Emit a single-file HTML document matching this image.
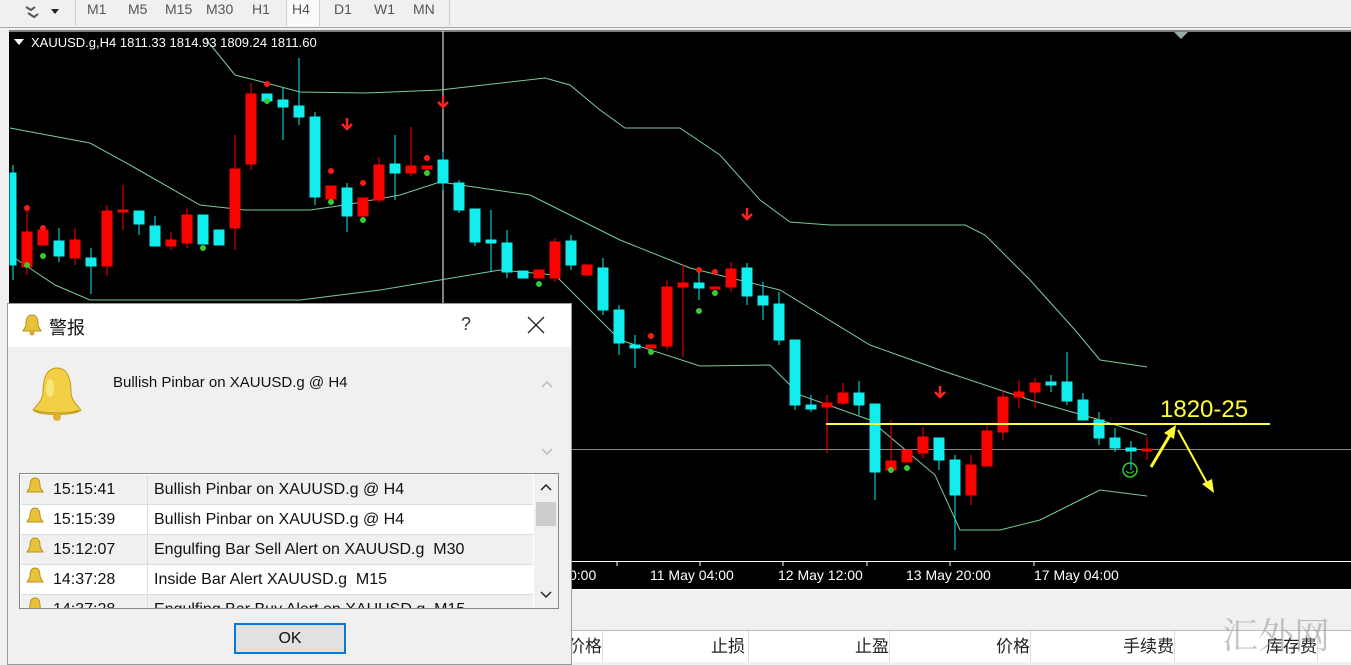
<!DOCTYPE html>
<html><head><meta charset="utf-8"><style>
body{margin:0;width:1351px;height:661px;overflow:hidden;background:#f0f0f0;font-family:"Liberation Sans","Noto Sans CJK SC",sans-serif;position:relative}
.tb{position:absolute;left:0;top:0;width:1351px;height:27px;background:#f0f0f0;border-bottom:1px solid #aaa}
.tb span{position:absolute;top:0;font-size:14px;color:#555;line-height:18px}
.hdr{position:absolute;top:630px;height:31px;left:560px;right:0;background:#fff;border-top:1px solid #bbb}
.hdr div{position:absolute;top:0;height:31px;border-right:1px solid #ddd;font-size:17px;text-align:right;line-height:31px;color:#222}
.dlg{position:absolute;left:7px;top:303px;width:563px;height:360px;background:#f0f0f0;border:1px solid #999}
.title{height:43px;background:#fff;position:relative}
.row{position:absolute;left:1px;width:512px;height:29px;border-bottom:1px solid #ddd;font-size:16px;line-height:29px;color:#111}
.row .t{position:absolute;left:32px}.row .m{position:absolute;left:133px}
.row .sep{position:absolute;left:126px;top:0;height:29px;border-left:1px solid #ddd}
</style></head><body>
<div class="tb">
<svg style="position:absolute;left:22px;top:2px" width="45" height="20"><path d="M4 5l5 3 4-3M6 11l6 4 4-3" stroke="#555" stroke-width="2" fill="none"/><path d="M29 7h8l-4 5z" fill="#222"/></svg>
<div style="position:absolute;left:75px;top:0;width:1px;height:26px;background:#ccc"></div>
<span style="left:87px">M1</span><span style="left:128px">M5</span><span style="left:165px">M15</span><span style="left:206px">M30</span><span style="left:252px">H1</span>
<div style="position:absolute;left:286px;top:0;width:32px;height:26px;background:#fafafa;border-left:1px solid #ccc;border-right:1px solid #ccc"></div>
<span style="left:292px">H4</span><span style="left:334px">D1</span><span style="left:374px">W1</span><span style="left:413px">MN</span>
<div style="position:absolute;left:449px;top:0;width:1px;height:26px;background:#ccc"></div>
</div>
<svg style="position:absolute;left:0;top:28px" width="1351" height="563" viewBox="0 28 1351 563">
<rect x="0" y="28" width="1351" height="563" fill="#f0f0f0"/>
<rect x="9" y="30" width="1342" height="559" fill="#000"/>
<line x1="9" y1="31" x2="1351" y2="31" stroke="#fff"/>
<line x1="9" y1="589.5" x2="1351" y2="589.5" stroke="#fff"/>
<line x1="9" y1="561.5" x2="1351" y2="561.5" stroke="#fff"/>
<path d="M1174 32h14l-7 7z" fill="#9aa"/>
<line x1="443" y1="31" x2="443" y2="560" stroke="#fff"/>
<line x1="9" y1="449.5" x2="1351" y2="449.5" stroke="#888"/>
<g fill="none" stroke="#7fc99a" stroke-width="1">
<path d="M205 38 L235 75 L255 80 L300 92 L365 93 L440 90 L545 78 L570 85 L600 110 L625 128 L680 128 L720 155 L760 200 L790 222 L830 225 L920 225 L965 225 L985 235 L1030 280 L1075 330 L1100 360 L1147 367"/>
<path d="M10 128 L90 143 L130 165 L200 205 L245 210 L310 210 L345 205 L400 195 L440 182 L495 190 L530 195 L560 210 L620 240 L690 268 L780 290 L870 345 L940 370 L1030 400 L1100 420 L1147 435"/>
<path d="M10 255 L55 285 L90 300 L300 300 L380 290 L440 280 L500 270 L555 275 L620 340 L700 366 L770 365 L800 395 L870 420 L935 475 L960 530 L1000 530 L1040 520 L1080 500 L1100 490 L1147 496"/>
</g>
<g stroke-width="1">
<!-- candles: cx, top, bottom -->
<g fill="#11eeee" stroke="#11eeee">
<rect x="10" y="173" width="6" height="92"/><line x1="13" y1="165" x2="13" y2="280"/>
<rect x="54" y="241" width="10" height="15"/><line x1="59" y1="228" x2="59" y2="262"/>
<rect x="86" y="258" width="10" height="8"/><line x1="91" y1="248" x2="91" y2="294"/>
<rect x="134" y="211" width="10" height="13"/><line x1="139" y1="211" x2="139" y2="235"/>
<rect x="150" y="226" width="10" height="20"/><line x1="155" y1="216" x2="155" y2="246"/>
<rect x="198" y="215" width="10" height="29"/>
<rect x="214" y="230" width="10" height="15"/>
<rect x="262" y="94" width="10" height="7"/>
<rect x="278" y="100" width="10" height="7"/><line x1="283" y1="88" x2="283" y2="140"/>
<rect x="294" y="106" width="10" height="11"/><line x1="299" y1="58" x2="299" y2="125"/>
<rect x="310" y="117" width="10" height="80"/><line x1="315" y1="112" x2="315" y2="205"/>
<rect x="342" y="188" width="10" height="28"/><line x1="347" y1="183" x2="347" y2="232"/>
<rect x="390" y="164" width="10" height="9"/><line x1="395" y1="135" x2="395" y2="200"/>
<rect x="438" y="160" width="10" height="23"/><line x1="443" y1="152" x2="443" y2="190"/>
<rect x="454" y="183" width="10" height="27"/><line x1="459" y1="180" x2="459" y2="213"/>
<rect x="470" y="209" width="10" height="33"/><line x1="475" y1="209" x2="475" y2="246"/>
<rect x="486" y="240" width="10" height="3"/><line x1="491" y1="210" x2="491" y2="272"/>
<rect x="502" y="243" width="10" height="29"/><line x1="507" y1="230" x2="507" y2="278"/>
<rect x="518" y="271" width="10" height="7"/>
<rect x="566" y="241" width="10" height="24"/><line x1="571" y1="235" x2="571" y2="270"/>
<rect x="598" y="268" width="10" height="42"/><line x1="603" y1="258" x2="603" y2="315"/>
<rect x="614" y="310" width="10" height="33"/><line x1="619" y1="305" x2="619" y2="355"/>
<rect x="630" y="345" width="10" height="3"/><line x1="635" y1="335" x2="635" y2="368"/>
<rect x="694" y="283" width="10" height="5"/><line x1="699" y1="270" x2="699" y2="300"/>
<rect x="742" y="268" width="10" height="28"/><line x1="747" y1="263" x2="747" y2="305"/>
<rect x="758" y="296" width="10" height="9"/><line x1="763" y1="282" x2="763" y2="320"/>
<rect x="774" y="304" width="10" height="36"/><line x1="779" y1="292" x2="779" y2="345"/>
<rect x="790" y="340" width="10" height="65"/><line x1="795" y1="340" x2="795" y2="410"/>
<rect x="806" y="405" width="10" height="4"/><line x1="811" y1="395" x2="811" y2="412"/>
<rect x="854" y="393" width="10" height="12"/><line x1="859" y1="381" x2="859" y2="415"/>
<rect x="870" y="404" width="10" height="68"/><line x1="875" y1="404" x2="875" y2="500"/>
<rect x="934" y="438" width="10" height="22"/><line x1="939" y1="438" x2="939" y2="470"/>
<rect x="950" y="460" width="10" height="35"/><line x1="955" y1="455" x2="955" y2="550"/>
<rect x="1046" y="382" width="10" height="3"/><line x1="1051" y1="375" x2="1051" y2="392"/>
<rect x="1062" y="382" width="10" height="19"/><line x1="1067" y1="352" x2="1067" y2="405"/>
<rect x="1078" y="400" width="10" height="20"/><line x1="1083" y1="393" x2="1083" y2="420"/>
<rect x="1094" y="420" width="10" height="18"/><line x1="1099" y1="412" x2="1099" y2="445"/>
<rect x="1110" y="438" width="10" height="10"/><line x1="1115" y1="428" x2="1115" y2="452"/>
<rect x="1126" y="448" width="10" height="3"/><line x1="1131" y1="441" x2="1131" y2="470"/>
</g>
<g fill="#ff0000" stroke="#ff0000">
<rect x="22" y="232" width="10" height="35"/><line x1="27" y1="210" x2="27" y2="275"/>
<rect x="38" y="230" width="10" height="15"/>
<rect x="70" y="240" width="10" height="18"/><line x1="75" y1="228" x2="75" y2="265"/>
<rect x="102" y="211" width="10" height="55"/><line x1="107" y1="205" x2="107" y2="276"/>
<rect x="118" y="210" width="10" height="2"/><line x1="123" y1="185" x2="123" y2="230"/>
<rect x="166" y="240" width="10" height="6"/><line x1="171" y1="232" x2="171" y2="250"/>
<rect x="182" y="215" width="10" height="28"/><line x1="187" y1="208" x2="187" y2="248"/>
<rect x="230" y="169" width="10" height="59"/><line x1="235" y1="135" x2="235" y2="250"/>
<rect x="246" y="94" width="10" height="70"/><line x1="251" y1="83" x2="251" y2="170"/>
<rect x="326" y="186" width="10" height="13"/>
<rect x="358" y="198" width="10" height="18"/>
<rect x="374" y="165" width="10" height="35"/><line x1="379" y1="157" x2="379" y2="203"/>
<rect x="406" y="166" width="10" height="7"/><line x1="411" y1="127" x2="411" y2="176"/>
<rect x="422" y="166" width="10" height="3"/>
<rect x="534" y="270" width="10" height="8"/>
<rect x="550" y="242" width="10" height="36"/><line x1="555" y1="238" x2="555" y2="282"/>
<rect x="582" y="265" width="10" height="10"/>
<rect x="646" y="345" width="10" height="3"/>
<rect x="662" y="287" width="10" height="59"/><line x1="667" y1="280" x2="667" y2="350"/>
<rect x="678" y="283" width="10" height="4"/><line x1="683" y1="265" x2="683" y2="357"/>
<rect x="710" y="287" width="10" height="2"/>
<rect x="726" y="269" width="10" height="18"/><line x1="731" y1="262" x2="731" y2="292"/>
<rect x="822" y="403" width="10" height="4"/><line x1="827" y1="395" x2="827" y2="453"/>
<rect x="838" y="393" width="10" height="10"/><line x1="843" y1="383" x2="843" y2="405"/>
<rect x="886" y="461" width="10" height="9"/><line x1="891" y1="420" x2="891" y2="470"/>
<rect x="902" y="450" width="10" height="12"/>
<rect x="918" y="437" width="10" height="16"/><line x1="923" y1="427" x2="923" y2="458"/>
<rect x="966" y="465" width="10" height="30"/><line x1="971" y1="455" x2="971" y2="505"/>
<rect x="982" y="431" width="10" height="35"/><line x1="987" y1="425" x2="987" y2="466"/>
<rect x="998" y="397" width="10" height="35"/><line x1="1003" y1="390" x2="1003" y2="440"/>
<rect x="1014" y="392" width="10" height="5"/><line x1="1019" y1="380" x2="1019" y2="408"/>
<rect x="1030" y="383" width="10" height="9"/><line x1="1035" y1="378" x2="1035" y2="408"/>
<rect x="1142" y="449" width="10" height="2"/><line x1="1147" y1="437" x2="1147" y2="460"/>
</g>
</g>
<g fill="#ff1a1a"><circle cx="27" cy="208" r="3"/><circle cx="43" cy="228" r="3"/><circle cx="267" cy="84" r="3"/><circle cx="331" cy="171" r="3"/><circle cx="363" cy="183" r="3"/><circle cx="427" cy="158" r="3"/><circle cx="651" cy="336" r="3"/><circle cx="699" cy="270" r="3"/><circle cx="715" cy="272" r="3"/></g>
<g fill="#33cc33"><circle cx="27" cy="265" r="3"/><circle cx="43" cy="256" r="3"/><circle cx="267" cy="101" r="3"/><circle cx="331" cy="202" r="3"/><circle cx="363" cy="220" r="3"/><circle cx="427" cy="173" r="3"/><circle cx="539" cy="284" r="3"/><circle cx="651" cy="352" r="3"/><circle cx="699" cy="311" r="3"/><circle cx="715" cy="293" r="3"/><circle cx="891" cy="470" r="3"/><circle cx="907" cy="468" r="3"/><circle cx="203" cy="248" r="3"/></g>
<g stroke="#ff2222" stroke-width="2.5" fill="none"><path d="M347 118v10M342 124l5 5 5-5"/><path d="M443 96v10M438 102l5 5 5-5"/><path d="M747 208v10M742 214l5 5 5-5"/><path d="M940 386v10M935 392l5 5 5-5"/></g>
<circle cx="1130" cy="470" r="7" fill="none" stroke="#33cc33" stroke-width="1.5"/>
<path d="M1126 471q4 4 8 0" stroke="#33cc33" fill="none"/>
<line x1="826" y1="424" x2="1270" y2="424" stroke="#ffff44" stroke-width="2"/>
<path d="M1151 467L1170 435" stroke="#ffff33" stroke-width="3"/><path d="M1164 433l12-8-2 14z" fill="#ffff33"/>
<path d="M1178 430L1207 483" stroke="#ffff33" stroke-width="2"/><path d="M1202 484l12 9-2-14z" fill="#ffff33"/>
<text x="1160" y="417" font-size="24" fill="#ffff33" font-family="Liberation Sans">1820-25</text>
<path d="M14 39h10l-5 6z" fill="#fff"/>
<text x="31" y="47" font-size="13" fill="#fff" font-family="Liberation Sans">XAUUSD.g,H4  1811.33 1814.93 1809.24 1811.60</text>
<g font-size="14" fill="#fff" font-family="Liberation Sans"><text x="569" y="580">0:00</text><text x="650" y="580">11 May 04:00</text><text x="778" y="580">12 May 12:00</text><text x="906" y="580">13 May 20:00</text><text x="1034" y="580">17 May 04:00</text></g>
<g stroke="#fff"><line x1="617" y1="562" x2="617" y2="566"/><line x1="700" y1="562" x2="700" y2="566"/><line x1="783" y1="562" x2="783" y2="566"/><line x1="867" y1="562" x2="867" y2="566"/><line x1="950" y1="562" x2="950" y2="566"/><line x1="1034" y1="562" x2="1034" y2="566"/></g>
</svg>
<div class="hdr">
<div style="left:0;width:42px">价格</div><div style="left:43px;width:142px;padding-right:3px">止损</div><div style="left:189px;width:140px">止盈</div><div style="left:330px;width:140px">价格</div><div style="left:474px;width:140px">手续费</div><div style="left:617px;width:140px">库存费</div>
</div>
<div style="position:absolute;left:1222px;top:608px;font-size:36px;color:rgba(150,150,150,.55);font-family:'Noto Serif CJK SC',serif">汇外网</div>
<div class="dlg">
<div class="title">
<svg style="position:absolute;left:13px;top:9px" width="22" height="24"><path d="M11 2c-5 0-6 5-6 9 0 3-2 5-3 7h18c-1-2-3-4-3-7 0-4-1-9-6-9z" fill="#e8c23a" stroke="#b8901a"/><circle cx="11" cy="20" r="2.5" fill="#d4a82a"/></svg>
<span style="position:absolute;left:41px;top:10px;font-size:18px;color:#111">警报</span>
<span style="position:absolute;left:453px;top:10px;font-size:18px;color:#333">?</span>
<svg style="position:absolute;left:519px;top:12px" width="18" height="18"><path d="M1 1L17 17M17 1L1 17" stroke="#222" stroke-width="1.3"/></svg>
</div>
<svg style="position:absolute;left:18px;top:60px" width="62" height="62"><path d="M31 4c-12 0-14 14-14 24 0 8-7 14-10 18 5 6 43 6 48 0-3-4-10-10-10-18 0-10-2-24-14-24z" fill="#f2cf45" stroke="#c09a20"/><path d="M9 46c8 4 36 4 44 0" stroke="#c09a20" fill="none"/><circle cx="31" cy="53" r="4" fill="#e0b030"/><ellipse cx="24" cy="24" rx="4" ry="9" fill="#fff3a0" opacity=".6"/></svg>
<span style="position:absolute;left:105px;top:70px;font-size:15px;color:#111">Bullish Pinbar on XAUUSD.g @ H4</span>
<svg style="position:absolute;left:532px;top:75px" width="14" height="80"><path d="M2 8l5-5 5 5M2 70l5 5 5-5" stroke="#bbb" fill="none" stroke-width="1.5"/></svg>
<div style="position:absolute;left:11px;top:169px;width:538px;height:134px;background:#fff;border:1px solid #888;overflow:hidden">
<div class="row" style="top:1px;background:#f0f0f0"><span class="t">15:15:41</span><span class="sep"></span><span class="m">Bullish Pinbar on XAUUSD.g @ H4</span></div>
<div class="row" style="top:31px"><span class="t">15:15:39</span><span class="sep"></span><span class="m">Bullish Pinbar on XAUUSD.g @ H4</span></div>
<div class="row" style="top:61px;background:#f0f0f0"><span class="t">15:12:07</span><span class="sep"></span><span class="m">Engulfing Bar Sell Alert on XAUUSD.g&nbsp; M30</span></div>
<div class="row" style="top:91px"><span class="t">14:37:28</span><span class="sep"></span><span class="m">Inside Bar Alert XAUUSD.g&nbsp; M15</span></div>
<div class="row" style="top:121px;background:#f0f0f0"><span class="t">14:37:28</span><span class="sep"></span><span class="m">Engulfing Bar Buy Alert on XAUUSD.g&nbsp; M15</span></div>
<svg style="position:absolute;left:5px;top:0" width="22" height="134"><g fill="#e8c23a" stroke="#b8901a"><path d="M10 4c-4 0-5 4-5 8 0 2-2 4-3 6h16c-1-2-3-4-3-6 0-4-1-8-5-8z"/><path d="M10 34c-4 0-5 4-5 8 0 2-2 4-3 6h16c-1-2-3-4-3-6 0-4-1-8-5-8z"/><path d="M10 64c-4 0-5 4-5 8 0 2-2 4-3 6h16c-1-2-3-4-3-6 0-4-1-8-5-8z"/><path d="M10 94c-4 0-5 4-5 8 0 2-2 4-3 6h16c-1-2-3-4-3-6 0-4-1-8-5-8z"/><path d="M10 124c-4 0-5 4-5 8 0 2-2 4-3 6h16c-1-2-3-4-3-6 0-4-1-8-5-8z"/></g></svg>
<div style="position:absolute;right:0;top:0;width:24px;height:134px;background:#f0f0f0">
<svg width="24" height="134"><path d="M7 16l5-5 5 5M7 118l5 5 5-5" stroke="#222" fill="none" stroke-width="1.5"/><rect x="2" y="28" width="20" height="24" fill="#cdcdcd"/></svg></div>
</div>
<div style="position:absolute;left:226px;top:319px;width:108px;height:27px;background:#e1e1e1;border:2px solid #0a78d7;font-size:16px;text-align:center;line-height:27px;color:#111">OK</div>
</div>
</body></html>
